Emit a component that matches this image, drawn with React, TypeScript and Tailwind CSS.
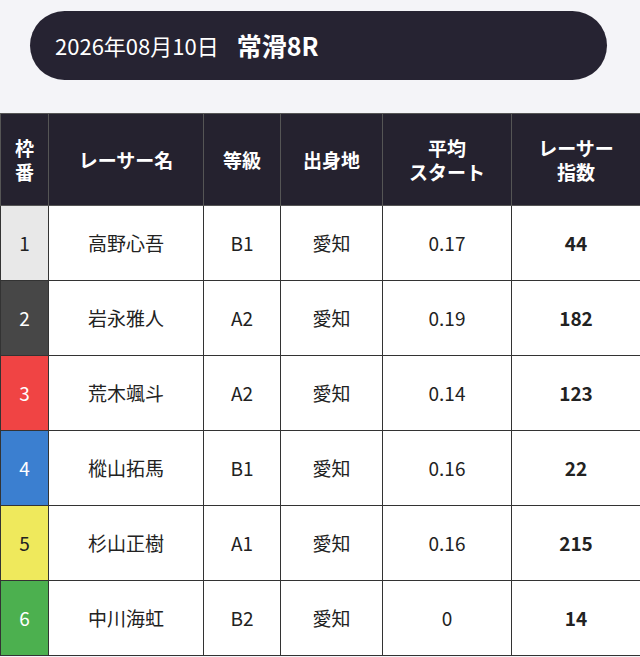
const font = { fontFamily: '"Noto Sans CJK JP", "Noto Sans", sans-serif' };

interface Racer {
  frame: number;
  name: string;
  grade: string;
  home: string;
  avgStart: string;
  score: number;
}

const racers: Racer[] = [
  { frame: 1, name: "高野心吾", grade: "B1", home: "愛知", avgStart: "0.17", score: 44 },
  { frame: 2, name: "岩永雅人", grade: "A2", home: "愛知", avgStart: "0.19", score: 182 },
  { frame: 3, name: "荒木颯斗", grade: "A2", home: "愛知", avgStart: "0.14", score: 123 },
  { frame: 4, name: "樅山拓馬", grade: "B1", home: "愛知", avgStart: "0.16", score: 22 },
  { frame: 5, name: "杉山正樹", grade: "A1", home: "愛知", avgStart: "0.16", score: 215 },
  { frame: 6, name: "中川海虹", grade: "B2", home: "愛知", avgStart: "0", score: 14 },
];

// frame number colours, same order as the boats
const frameStyles: Record<number, string> = {
  1: "bg-[#e8e8e8] text-[#222]",
  2: "bg-[#474747] text-white",
  3: "bg-[#f04444] text-white",
  4: "bg-[#3b7fd0] text-white",
  5: "bg-[#efe95c] text-[#222]",
  6: "bg-[#4cb04f] text-white",
};

export default function App() {
  return (
    <div className="min-h-screen w-[640px] bg-[#f4f4f8]" style={font}>
      {/* Race title */}
      <div className="pt-[11px] pl-[30px] pr-[33px] pb-[33px]">
        <div className="h-[69px] rounded-full bg-[#262332] flex items-center pl-[25px] gap-[18px] text-white">
          <span className="text-[22px]">2026年08月10日</span>
          <span className="text-[25px] font-bold">常滑8R</span>
        </div>
      </div>

      {/* Racer table */}
      <table className="w-[640px] table-fixed border-collapse text-[#222]">
        <colgroup>
          <col className="w-[48px]" />
          <col className="w-[155px]" />
          <col className="w-[77px]" />
          <col className="w-[102px]" />
          <col className="w-[129px]" />
          <col className="w-[129px]" />
        </colgroup>
        <thead>
          <tr className="h-[92px] bg-[#25222f] text-white text-[19px] leading-[24px] font-bold">
            <th className="border border-[#555] font-bold">枠<br />番</th>
            <th className="border border-[#555] font-bold">レーサー名</th>
            <th className="border border-[#555] font-bold">等級</th>
            <th className="border border-[#555] font-bold">出身地</th>
            <th className="border border-[#555] font-bold">平均<br />スタート</th>
            <th className="border border-[#555] font-bold">レーサー<br />指数</th>
          </tr>
        </thead>
        <tbody className="bg-white text-[19px]">
          {racers.map((r) => (
            <tr key={r.frame} className="h-[75px]">
              <td className={`border border-[#333] text-center ${frameStyles[r.frame]}`}>{r.frame}</td>
              <td className="border border-[#333] text-center">{r.name}</td>
              <td className="border border-[#333] text-center">{r.grade}</td>
              <td className="border border-[#333] text-center">{r.home}</td>
              <td className="border border-[#333] text-center">{r.avgStart}</td>
              <td className="border border-[#333] text-center font-bold">{r.score}</td>
            </tr>
          ))}
        </tbody>
      </table>
    </div>
  );
}
